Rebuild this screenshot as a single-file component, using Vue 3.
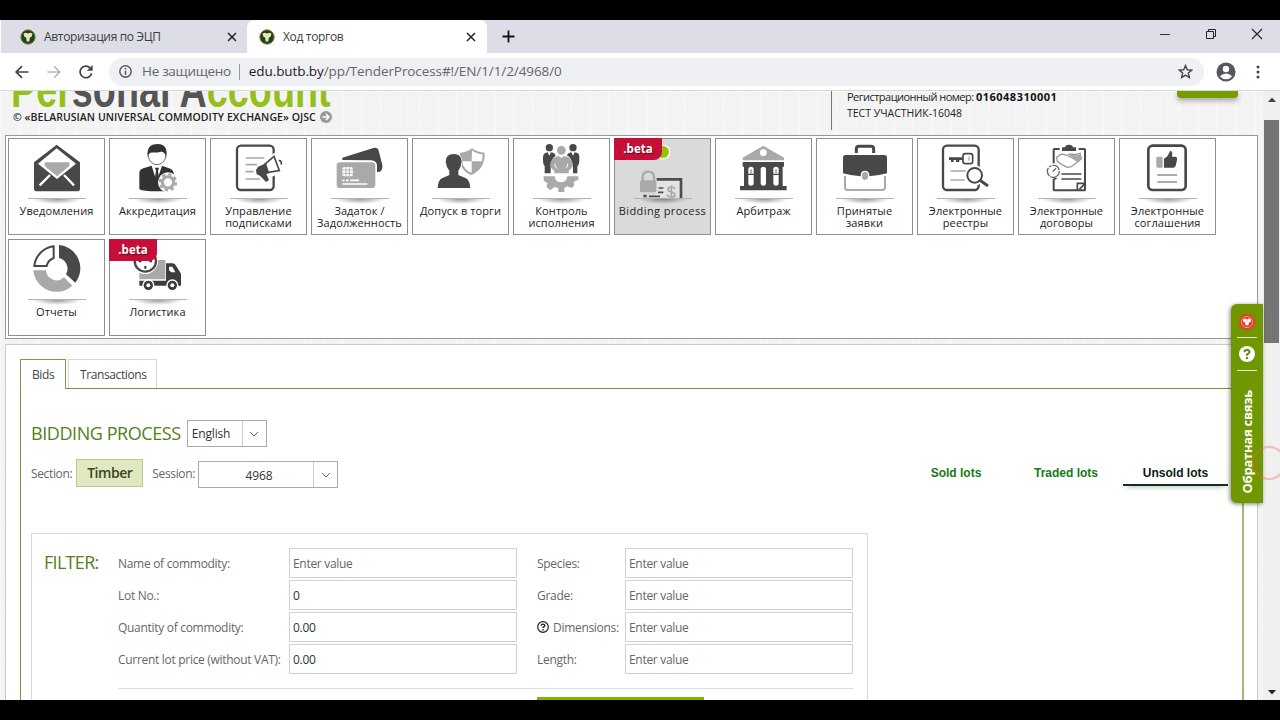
<template>
  <div class="screen">
    <!-- Tab strip -->
    <div class="tab-strip">
      <div v-for="tab in browserTabs" :key="tab.title" class="browser-tab" :class="{ current: tab.current }">
        <svg class="favicon" width="16" height="16" viewBox="0 0 16 16">
          <circle cx="8" cy="8" r="7.2" fill="#0c4a25" stroke="#a8762c" stroke-width="1" />
          <path d="M3.5 4.6l2.2-.9L8 4.6l2.300-.9 2.200.9-.9 3.200-1.700.8-.6 3.900H6.700l-.6-3.900-1.700-.8z" fill="#f3e3b4" />
        </svg>
        <span class="tab-title">{{ tab.title }}</span>
        <svg width="10" height="10" viewBox="0 0 10 10"><path d="M1 1l8 8M9 1L1 9" stroke="#222" stroke-width="1.5" /></svg>
      </div>
      <svg class="new-tab" width="13" height="13" viewBox="0 0 13 13"><path d="M6.5 .5v12M.5 6.5h12" stroke="#111" stroke-width="1.8" /></svg>
      <div class="window-buttons">
        <svg width="12" height="12" viewBox="0 0 12 12"><path d="M1 6.5h10" stroke="#333" /></svg>
        <svg width="12" height="12" viewBox="0 0 12 12"><path d="M1.5 3.5h7v7h-7zM3.5 3.5v-2h7v7h-2" fill="none" stroke="#222" /></svg>
        <svg width="12" height="12" viewBox="0 0 12 12"><path d="M1 1l10 10M11 1L1 11" stroke="#222" stroke-width="1.1" /></svg>
      </div>
    </div>

    <!-- Toolbar -->
    <div class="toolbar">
      <svg class="nav" width="14" height="14" viewBox="0 0 14 14"><path d="M13.5 7H1.5M7 1.2L1.2 7 7 12.8" fill="none" stroke="#444" stroke-width="1.7" /></svg>
      <svg class="nav" width="14" height="14" viewBox="0 0 14 14"><path d="M.5 7h12M7 1.2L12.8 7 7 12.8" fill="none" stroke="#b4b4b6" stroke-width="1.5" /></svg>
      <svg class="nav" width="14" height="14" viewBox="0 0 14 14">
        <path d="M12.6 8.2A5.8 5.8 0 1 1 11.2 3" fill="none" stroke="#444" stroke-width="1.7" />
        <path d="M13.6 0v5.8H7.8z" fill="#444" />
      </svg>
      <div class="address">
        <svg width="13" height="13" viewBox="0 0 13 13">
          <circle cx="6.5" cy="6.5" r="5.7" fill="none" stroke="#555" stroke-width="1.4" />
          <path d="M6.5 5.7v4M6.5 3v1.5" stroke="#555" stroke-width="1.5" />
        </svg>
        <span class="insecure">Не защищено</span>
        <span class="divider"></span>
        <span class="url"><b>edu.butb.by</b>/pp/TenderProcess#!/EN/1/1/2/4968/0</span>
        <svg class="star" width="15" height="15" viewBox="0 0 24 24">
          <path d="M12 2.5l2.8 6.7 7.2.6-5.5 4.7 1.7 7.1-6.2-3.8-6.2 3.8 1.7-7.1L2 9.800l7.200-.6z" fill="none" stroke="#444" stroke-width="2.2" />
        </svg>
      </div>
      <svg class="avatar" width="20" height="20" viewBox="0 0 20 20">
        <circle cx="10" cy="10" r="9.5" fill="#55575c" />
        <circle cx="10" cy="7" r="3.2" fill="#fff" />
        <path d="M3.8 14.2Q10 8.6 16.2 14.2 13.8 17.2 10 17.2T3.8 14.2z" fill="#fff" />
      </svg>
      <svg width="4" height="14" viewBox="0 0 4 14"><g fill="#444"><circle cx="2" cy="2" r="1.5" /><circle cx="2" cy="7" r="1.5" /><circle cx="2" cy="12" r="1.5" /></g></svg>
    </div>

    <div class="viewport">
      <div class="page">
        <header class="site-header">
          <div class="brand">
            <div class="brand-title"><span>Per</span>sonal A<span>ccount</span></div>
            <div class="brand-owner">
              <span class="owner-text">© «BELARUSIAN UNIVERSAL COMMODITY EXCHANGE» OJSC</span>
              <svg width="12" height="12" viewBox="0 0 12 12">
                <circle cx="6" cy="6" r="6" fill="#999" />
                <path d="M2.5 6h6M6 3l3 3-3 3" fill="none" stroke="#fff" stroke-width="1.6" />
              </svg>
            </div>
          </div>
          <div class="member">
            <div class="reg">Регистрационный номер: <b>016048310001</b></div>
            <div class="member-name">ТЕСТ УЧАСТНИК-16048</div>
          </div>
          <div class="exit-btn"></div>
        </header>

        <!-- Main menu -->
        <nav class="menu">
          <a v-for="item in menu" :key="item.label" class="tile" :class="{ active: item.active }">
            <svg class="tile-icon" width="97" height="60" :viewBox="item.box" v-html="item.icon"></svg>
            <span class="tile-line"></span>
            <span class="tile-label">{{ item.label }}</span>
            <span v-if="item.beta" class="beta">.beta</span>
          </a>
        </nav>

        <main class="content">
          <div class="tabs">
            <div class="tab selected">Bids</div>
            <div class="tab">Transactions</div>
          </div>
          <section class="tab-body">
            <div class="title-row">
              <h1>BIDDING PROCESS</h1>
              <div class="select language">
                <span class="value">English</span>
                <span class="arrow"><svg width="10" height="6" viewBox="0 0 10 6"><path d="M1 1l4 4 4-4" fill="none" stroke="#666" /></svg></span>
              </div>
            </div>
            <div class="session-row">
              <span class="caption">Section:</span>
              <button class="section-btn">Timber</button>
              <span class="caption">Session:</span>
              <div class="select number">
                <span class="value">4968</span>
                <span class="arrow"><svg width="10" height="6" viewBox="0 0 10 6"><path d="M1 1l4 4 4-4" fill="none" stroke="#666" /></svg></span>
              </div>
              <div class="lots">
                <a>Sold lots</a>
                <a>Traded lots</a>
                <a class="chosen">Unsold lots</a>
              </div>
            </div>

            <div class="filter">
              <h2>FILTER:</h2>
              <div class="filter-body">
                <div class="fields">
                  <template v-for="row in filterRows" :key="row.left">
                    <label>{{ row.left }}</label>
                    <div class="input" :class="{ filled: row.value }">{{ row.value || 'Enter value' }}</div>
                    <label class="right">
                      <svg v-if="row.help" width="12" height="12" viewBox="0 0 12 12">
                        <circle cx="6" cy="6" r="5.3" fill="none" stroke="#222" stroke-width="1.2" />
                        <path d="M4.2 4.7Q4.3 3.1 6 3.1T7.8 4.6Q7.7 5.5 6 6.3v.8M6 8v1.4" fill="none" stroke="#222" stroke-width="1.4" />
                      </svg>
                      {{ row.right }}
                    </label>
                    <div class="input">Enter value</div>
                  </template>
                </div>
                <div class="filter-end"><div class="search-btn"></div></div>
              </div>
            </div>
          </section>
        </main>
      </div>

      <div class="scrollbar">
        <svg width="8" height="5" viewBox="0 0 8 5"><path d="M0 5l4-4.5L8 5z" fill="#444" /></svg>
        <div class="thumb"></div>
        <svg width="8" height="5" viewBox="0 0 8 5"><path d="M0 0l4 4.5L8 0z" fill="#222" /></svg>
      </div>
    </div>

    <!-- Feedback panel -->
    <aside class="feedback">
      <svg width="20" height="20" viewBox="0 0 20 20">
        <circle cx="10" cy="10" r="8.5" fill="none" stroke="#e8452c" stroke-width="1.5" stroke-dasharray="1.3 1" />
        <circle cx="10" cy="10" r="7.3" fill="#dd3c22" />
        <circle cx="10" cy="10" r="5.6" fill="none" stroke="#f7c4b8" stroke-width=".7" />
        <g fill="#fff"><circle cx="8" cy="8.5" r="2" /><circle cx="12" cy="8.5" r="2" /><circle cx="10" cy="11.5" r="2" /></g>
      </svg>
      <span class="rule"></span>
      <svg width="16" height="16" viewBox="0 0 16 16">
        <circle cx="8" cy="8" r="8" fill="#fff" />
        <path d="M5.4 6.2Q5.5 4 8 4t2.6 2Q10.5 7.3 8 8.5v1.3M8 10.9v2" fill="none" stroke="#638b00" stroke-width="2" />
      </svg>
      <span class="rule second"></span>
      <span class="feedback-text">Обратная связь</span>
    </aside>
    <div class="click-ring"></div>
  </div>
</template>

<script setup>
const browserTabs = [
  { title: 'Авторизация по ЭЦП' },
  { title: 'Ход торгов', current: true }
]

const dark = '#484848'
const gray = '#a9a9a9'

// Every icon is drawn on a 291x180 area, shown at a third of that size
const menu = [
  {
    label: 'Уведомления',
    box: '24 24 291 180',
    icon: `<path d="M102 97L170 44 240 97V177q0 7-7 7H109q-7 0-7-7z" fill="${dark}"/>
      <path d="M114 101L170 55 228 101 171 147z" fill="#fff"/>
      <path d="M134 97h74v11l-37 31-37-31z" fill="${gray}"/>
      <path d="M119 166l31-31M222 166l-30-31" stroke="#fff" stroke-width="7"/>`
  },
  {
    label: 'Аккредитация',
    box: '327 24 291 180',
    icon: `<path d="M445 76C445 94 460 104 471 104S497 94 497 76" fill="#fff" stroke="${dark}" stroke-width="2.5"/>
      <path d="M443 80C439 50 455 42 473 42 496 42 503 58 499 82 495 68 488 64 480 66 464 70 452 64 447 72z" fill="#333"/>
      <path d="M418 178V128Q419 118 430 115L455 107 470 155 486 107 511 116Q521 120 522 135V150L504 184H470Q430 184 418 178z" fill="#333"/>
      <path d="M465 113h12l-3 10 5 32-8 12-8-12 5-32z" fill="#333"/>
      <circle cx="504" cy="157" r="30" fill="#fff"/>
      <circle cx="504" cy="157" r="24" fill="none" stroke="${gray}" stroke-width="7" stroke-dasharray="10 8.85"/>
      <circle cx="504" cy="157" r="17" fill="none" stroke="${gray}" stroke-width="9"/>`
  },
  {
    label: 'Управление подписками',
    box: '630 24 291 180',
    icon: `<rect x="711" y="47" width="110" height="133" rx="12" fill="none" stroke="${dark}" stroke-width="7"/>
      <path d="M737 84h56M737 104h34M737 125h25M737 147h46" stroke="${gray}" stroke-width="5"/>
      <path d="M762 112L796 94 822 68 849 90 844 128 816 140 812 160 795 162 774 140 760 134z" fill="#fff"/>
      <path d="M794 103L822 79 838 122 800 128z" fill="#fff" stroke="${dark}" stroke-width="5"/>
      <path d="M768 120L774 110 798 100 808 129 799 132 807 150 798 156 780 137 770 133z" fill="${dark}"/>
      <path d="M836 92q9-2 8 12" fill="none" stroke="${dark}" stroke-width="5"/>`
  },
  {
    label: 'Задаток / Задолженность',
    box: '9 24 291 180',
    icon: `<path d="M103 90L103 83 196 54q13-3 16 8l11 42q2 14-7 21l-9 1V106Q205 92 190 91z" fill="${dark}"/>
      <rect x="82" y="93" width="124" height="84" rx="13" fill="#fff"/>
      <rect x="86" y="97" width="116" height="77" rx="10" fill="${gray}"/>
      <rect x="103" y="111" width="32" height="28" rx="7" fill="#fff"/>
      <path d="M103 120h11v-9M103 130h11v9M135 120h-11v-9M135 130h-11v9M114 120h10v10h-10z" fill="none" stroke="${gray}" stroke-width="2.5"/>
      <path d="M103 151h7M114 151h8M127 151h26M103 162h75" stroke="#fff" stroke-width="5"/>`
  },
  {
    label: 'Допуск в торги',
    box: '312 24 291 180',
    icon: `<path d="M456 68Q478 67 492 55 507 67 530 68 532 117 489 135 460 122 456 95z" fill="${gray}"/>
      <path d="M492 61Q506 72 524 73L522 94H491zM491 94V129Q464 118 463 94z" fill="#fff"/>
      <path d="M411 98q0-30 26-30t26 30q-2 16-9 26v10l22 10q12 8 13 35H384z" fill="#fff"/>
      <path d="M413 95q0-23 24-23t24 23q-2 17-10 27v13l23 10q11 6 13 29h-98q1-23 13-29l22-10V122q-9-10-11-27z" fill="${dark}"/>`
  },
  {
    label: 'Контроль исполнения',
    box: '615 24 291 180',
    icon: `<g fill="${dark}"><circle cx="724" cy="53" r="11"/><circle cx="795" cy="53" r="11"/>
      <path d="M705 80q2-12 14-13l5 10 5-10q14 1 14 14v49h-33V108q-6-4-5-28zM776 80q2-12 14-13l5 10 5-10q14 1 14 14 1 24-6 28v21h-32z"/></g>
      <path d="M747 58h26l2 18q22 8 20 52v6H728v-12q-2-38 18-46z" fill="#fff"/>
      <circle cx="760" cy="61" r="13" fill="${gray}"/>
      <path d="M727 102q4-22 25-24l8 6 8-6q21 2 26 24 2 10-12 20v8h-43v-8q-14-8-12-20z" fill="${gray}"/>
      <path d="M741 101q-2 8 6 14M779 101q2 8-6 14" fill="none" stroke="#fff" stroke-width="3"/>
      <path d="M707 139h33q2 18 19 18t19-18h33v10l-14 6 2 10-7 9-15-5-8 5v12h-18v-12l-12-3-12 10-12-11 4-10-12-8z" fill="${gray}"/>`
  },
  {
    label: 'Bidding process',
    box: '12 24 291 180',
    active: true,
    beta: true,
    icon: `<circle cx="159" cy="66" r="22" fill="#fff"/><circle cx="159" cy="66" r="18" fill="#94c100"/>
      <path d="M138 150h74v52h-74z" fill="#e4e4e4"/>
      <path d="M140 148H213V204M100 198h10" fill="none" stroke="#4d4d4d" stroke-width="8"/>
      <path d="M146 174h14M144 187h16M117 199h33" stroke="#4d4d4d" stroke-width="5"/>
      <rect x="87" y="150" width="55" height="41" rx="6" fill="#dadada"/>
      <path d="M98 154V142q0-17 17-17t17 17v12" fill="none" stroke="#aaa" stroke-width="7"/>
      <rect x="90" y="151" width="49" height="36" rx="5" fill="#aaa"/>
      <path d="M195 177q-3-6-11-6-10 0-10 7t10 8q11 2 11 9 0 6-11 6t-12-7M184 166v38" fill="none" stroke="#aaa" stroke-width="5"/>`
  },
  {
    label: 'Арбитраж',
    box: '315 24 291 180',
    icon: `<path d="M398 91V83L460 47 522 83v8z" fill="${gray}"/><circle cx="460" cy="68" r="10" fill="#fff"/>
      <path d="M398 96H522V110H518V168h12v13H390V168h12V110H398z" fill="${dark}"/>
      <g fill="#fff"><rect x="415" y="110" width="16" height="57" rx="8"/><rect x="452" y="110" width="16" height="57" rx="8"/><rect x="490" y="110" width="16" height="57" rx="8"/></g>
      <path d="M413 133h20M489 133h20" stroke="${dark}" stroke-width="4"/>
      <path d="M423 118v14M498 118v14" stroke="${gray}" stroke-width="5"/>`
  },
  {
    label: 'Принятые заявки',
    box: '618 24 291 180',
    icon: `<path d="M739 69V57q0-8 8-8h36q8 0 8 8v12" fill="none" stroke="${dark}" stroke-width="9"/>
      <path d="M705 138v34q0 8 8 8h104q8 0 8-8v-34" fill="none" stroke="${gray}" stroke-width="6"/>
      <path d="M699 83q0-8 8-8h116q8 0 8 8v47q-30 8-54 9H752q-24-1-53-9z" fill="${dark}"/>
      <path d="M754 144v-8q0-12 11-12t11 12v8q-2 8-11 8t-11-8z" fill="${gray}" stroke="#fff" stroke-width="4"/>`
  },
  {
    label: 'Электронные реестры',
    box: '17 24 291 180',
    icon: `<rect x="95" y="47" width="107" height="133" rx="12" fill="none" stroke="${dark}" stroke-width="7"/>
      <path d="M117 123h48M117 150h43" stroke="${gray}" stroke-width="5"/>
      <path d="M113 86h42M119 92h8M134 92h10" stroke="${dark}" stroke-width="8"/>
      <rect x="155" y="71" width="29" height="30" rx="7" fill="#fff" stroke="${dark}" stroke-width="5"/>
      <path d="M173 80v12" stroke="${gray}" stroke-width="4"/>
      <path d="M206 150l24 18" stroke="#fff" stroke-width="20"/>
      <circle cx="190" cy="136" r="30" fill="#fff"/>
      <circle cx="190" cy="136" r="22" fill="#fff" stroke="${dark}" stroke-width="6"/>
      <path d="M206 151l24 17" stroke="${dark}" stroke-width="9"/>`
  },
  {
    label: 'Электронные договоры',
    box: '320 24 291 180',
    icon: `<rect x="427" y="57" width="94" height="124" rx="2" fill="#fff" stroke="${dark}" stroke-width="6"/>
      <path d="M445 48h57v22h-57z" fill="#fff"/>
      <path d="M452 63V52h9q1-8 12-8t12 8h9v11z" fill="${dark}"/>
      <path d="M436 82l14-10 18 4 8-4 16 2 14-4 4 16-14 12-16 12-12 2-16-8-14-10z" fill="#fff" stroke="#999" stroke-width="4"/>
      <path d="M468 80l10-6 18 2 12-2 2 12-14 10-16-12z" fill="${gray}"/>
      <path d="M450 132h60M450 147h60" stroke="${dark}" stroke-width="4.5"/>
      <path d="M498 181V160h23M504 178l14-14" fill="none" stroke="${dark}" stroke-width="5"/>
      <circle cx="426" cy="124" r="24" fill="#fff"/>
      <circle cx="426" cy="124" r="18" fill="none" stroke="#666" stroke-width="4" stroke-dasharray="26 3 8 3"/>
      <path d="M434 115l-10 10M424 142l10 4-8 3" fill="none" stroke="${dark}" stroke-width="3.5"/>`
  },
  {
    label: 'Электронные соглашения',
    box: '623 24 291 180',
    icon: `<rect x="711" y="47" width="112" height="133" rx="13" fill="none" stroke="${dark}" stroke-width="8"/>
      <rect x="735" y="80" width="19" height="33" rx="4" fill="${gray}"/>
      <path d="M758 86l10-7 9-17q8 1 5 18h12q5 2 3 10l-4 17q-2 6-8 6h-27z" fill="${dark}"/>
      <path d="M738 135h59M738 156h59" stroke="${gray}" stroke-width="6"/>`
  },
  {
    label: 'Отчеты',
    box: '24 9 291 180',
    icon: `<path d="M177 27A70 70 0 0 1 226 140L198 115A33 33 0 0 0 177 66z" fill="${dark}"/>
      <path d="M100 103A70 70 0 0 0 217 149L192 124A32 32 0 0 1 138 103z" fill="${gray}"/>
      <path d="M103 90A66 66 0 0 1 161 31V66A34 34 0 0 0 140 90z" fill="#fff" stroke="${dark}" stroke-width="6"/>`
  },
  {
    label: 'Логистика',
    box: '327 9 291 180',
    beta: true,
    icon: `<path d="M418 110V130H496V72H466Q474 100 450 111 434 117 418 110z" fill="${gray}"/>
      <circle cx="436" cy="75" r="38" fill="#fff"/>
      <circle cx="436" cy="75" r="32" fill="#fff" stroke="${dark}" stroke-width="7"/>
      <path d="M416 76h8M448 76h8M436 90v8" stroke="#333" stroke-width="6"/>
      <path d="M418 134h80V82h20q7 0 11 9l14 22v36H418z" fill="#3c3c3c"/>
      <path d="M507 92h10l9 17h-12l-7-6z" fill="#fff"/>
      <g fill="#3c3c3c" stroke="#fff" stroke-width="4"><circle cx="445" cy="148" r="16"/><circle cx="517" cy="148" r="16"/></g>
      <g fill="#fff"><circle cx="445" cy="148" r="6"/><circle cx="517" cy="148" r="6"/></g>`
  }
]

const filterRows = [
  { left: 'Name of commodity:', right: 'Species:' },
  { left: 'Lot No.:', value: '0', right: 'Grade:' },
  { left: 'Quantity of commodity:', value: '0.00', right: 'Dimensions:', help: true },
  { left: 'Current lot price (without VAT):', value: '0.00', right: 'Length:' }
]
</script>

<style>
body {
  background: #000;
}
</style>

<style scoped>
.screen {
  position: relative;
  display: flex;
  flex-direction: column;
  box-sizing: border-box;
  width: 1280px;
  height: 720px;
  padding: 20px 0;
  overflow: hidden;
  background: #000;
  font-family: 'Open Sans', 'Noto Sans', sans-serif;
  color: #222;
}

.screen * {
  box-sizing: border-box;
}

svg {
  display: block;
  flex-shrink: 0;
}

/* Browser frame */
.tab-strip {
  display: flex;
  align-items: center;
  height: 33px;
  background: #dcdde6;
  border-left: 1px solid #fff;
}

.browser-tab {
  display: flex;
  align-items: center;
  width: 246px;
  height: 33px;
  padding: 0 10px 0 19px;
}

.browser-tab.current {
  width: 240px;
  padding: 0 11px 0 12px;
  background: #fff;
  border-radius: 7px 7px 0 0;
}

.tab-title {
  flex: 1;
  margin-left: 8px;
  font-size: 12px;
  letter-spacing: -0.33px;
  color: #3c3c3c;
  white-space: nowrap;
}

.new-tab {
  margin-left: 15px;
}

.window-buttons {
  display: flex;
  gap: 34px;
  margin: -5px 17px 0 auto;
}

.toolbar {
  display: flex;
  align-items: center;
  height: 37px;
  padding: 0 20px 0 15px;
  background: #fff;
}

.nav {
  margin-right: 18px;
}

.address {
  display: flex;
  align-items: center;
  width: 1095px;
  height: 28px;
  margin-left: -2px;
  padding: 0 11px 0 10px;
  border-radius: 14px;
  background: #eff0f4;
  font-size: 13.5px;
  line-height: 17px;
  color: #666;
  white-space: nowrap;
}

.insecure {
  margin-left: 10px;
  letter-spacing: -0.3px;
}

.divider {
  width: 1px;
  height: 16px;
  margin: 0 9px 0 8px;
  background: #999;
}

.url {
  letter-spacing: -0.09px;
}

.url b {
  font-weight: 400;
  color: #222;
}

.star {
  margin-left: auto;
}

.avatar {
  margin: 0 20px 0 auto;
}

.viewport {
  display: flex;
  height: 610px;
  border-top: 1px solid #d8d8da;
}

.page {
  width: 1263px;
  overflow: hidden;
  background:
    repeating-linear-gradient(90deg, rgba(255, 255, 255, 0.25) 0 2px, transparent 2px 7px, rgba(255, 255, 255, 0.15) 7px 8px, transparent 8px 19px),
    repeating-linear-gradient(rgba(255, 255, 255, 0.25) 0 1px, transparent 1px 6px, rgba(255, 255, 255, 0.15) 6px 8px, transparent 8px 17px),
    #f3f3f3;
}

/* Site header */
.site-header {
  display: flex;
  height: 44px;
  padding-left: 13px;
}

.brand {
  display: flex;
  flex-direction: column;
  justify-content: flex-end;
  width: 819px;
  height: 39px;
  padding-bottom: 6px;
  border-right: 1px solid #777;
}

.brand-title {
  width: 430px;
  margin: 0 0 2px -2px;
  font-family: 'Liberation Sans', sans-serif;
  font-size: 50px;
  font-weight: 700;
  line-height: 36px;
  color: #555;
  white-space: nowrap;
  transform: scaleX(0.755);
  transform-origin: left;
}

.brand-title span {
  color: #93c01a;
}

.brand-owner {
  display: flex;
  align-items: center;
  gap: 4px;
  height: 14px;
  font-size: 10.5px;
  font-weight: 600;
  line-height: 14px;
  letter-spacing: 0.06px;
  white-space: nowrap;
}

.member {
  width: 330px;
  margin: -2px 0 0 15px;
  font-size: 11px;
  line-height: 16px;
  white-space: nowrap;
}

.reg {
  letter-spacing: -0.52px;
}

.member b {
  letter-spacing: 0.5px;
  color: #111;
}

.member-name {
  font-size: 10.5px;
}

.exit-btn {
  width: 61px;
  height: 7px;
  background: #759c00;
  border-radius: 0 0 4px 4px;
  box-shadow: 0 3px 5px rgba(0, 0, 0, 0.3);
}

/* Menu tiles */
.menu {
  display: grid;
  grid-template-columns: repeat(12, 97px);
  grid-auto-rows: 97px;
  gap: 4px;
  width: 1253px;
  height: 204px;
  margin-left: 5px;
  padding: 2px;
  background: #fff;
  border: 1px solid #999;
}

.tile {
  position: relative;
  display: flex;
  flex-direction: column;
  align-items: center;
  border: 1px solid #8e8e8e;
  background: #fff;
}

.tile.active {
  background: #dadada;
}

.tile-icon {
  margin: -1px;
}

.tile-line {
  width: 58px;
  height: 7px;
  margin-top: 1px;
  border-top: 1px solid #b4b4b4;
  background: radial-gradient(ellipse 25px 5px at 50% 0, rgba(0, 0, 0, 0.4), transparent);
}

.tile-label {
  width: 90px;
  font-size: 11px;
  line-height: 12px;
  letter-spacing: 0.1px;
  text-align: center;
  color: #222;
}

.active .tile-label {
  letter-spacing: 0.4px;
}

.beta {
  position: absolute;
  top: -1px;
  left: -1px;
  width: 48px;
  height: 22px;
  border-radius: 0 0 8px 0;
  background: #c60f38;
  font-size: 11.5px;
  font-weight: 700;
  line-height: 21px;
  text-align: center;
  color: #fff;
  text-shadow: 1px 1px 1px rgba(0, 0, 0, 0.5);
}

/* Content */
.content {
  width: 1253px;
  height: 400px;
  margin: 5px 0 0 5px;
  padding: 14px;
  background: #fff;
  border: 1px solid #ccc;
}

.tabs {
  display: flex;
  gap: 3px;
  height: 29px;
}

.tab {
  width: 89px;
  height: 29px;
  padding-left: 11px;
  border: 1px solid #d6d6d6;
  border-bottom: 0;
  font-size: 12px;
  line-height: 30px;
  letter-spacing: -0.4px;
  color: #444;
}

.tab.selected {
  position: relative;
  z-index: 1;
  width: 46px;
  height: 30px;
  margin-right: -1px;
  background: #fff;
  border-color: #7d9a48;
}

.tab-body {
  width: 1224px;
  height: 360px;
  padding: 31px 10px 0;
  border: 1px solid #789438;
  border-right: 2px solid #9dbb72;
  border-bottom: 0;
}

.title-row {
  display: flex;
  align-items: center;
  gap: 6px;
  height: 27px;
}

h1,
h2 {
  margin: 0;
  font-size: 18px;
  font-weight: 400;
  letter-spacing: -0.43px;
  color: #55801c;
  white-space: nowrap;
}

h1 {
  padding-bottom: 2px;
}

.select {
  display: flex;
  height: 27px;
  border: 1px solid #aaa;
  font-size: 12px;
  letter-spacing: -0.15px;
  color: #333;
}

.select .value {
  flex: 1;
  padding-left: 4px;
  line-height: 26px;
}

.arrow {
  display: flex;
  align-items: center;
  justify-content: center;
  width: 24px;
  border-left: 1px solid #ccc;
}

.language {
  width: 80px;
}

.session-row {
  display: flex;
  align-items: center;
  height: 28px;
  margin-top: 12px;
}

.caption {
  font-size: 12px;
  letter-spacing: -0.35px;
  color: #666;
}

.section-btn {
  width: 67px;
  height: 28px;
  margin: -1px 9px 0 4px;
  padding: 0;
  border: 1px solid #b9c894;
  background: #dfe8bf;
  font-family: inherit;
  font-size: 14px;
  font-weight: 600;
  letter-spacing: -0.45px;
  color: #3c4428;
}

.select.number {
  width: 140px;
  margin: 3px 0 0 3px;
}

.number .value {
  padding-left: 6px;
  line-height: 27px;
  text-align: center;
}

.lots {
  display: flex;
  margin: -1px 4px 0 auto;
  font-family: 'Liberation Sans', sans-serif;
  font-size: 12px;
  font-weight: 700;
  line-height: 26px;
  color: #167a16;
  text-align: center;
}

.lots a {
  width: 110px;
  height: 26px;
}

.lots .chosen {
  width: 105px;
  margin-left: 2px;
  color: #0c1c10;
  border-bottom: 2px solid #123020;
  box-shadow: 0 5px 5px -4px rgba(0, 40, 0, 0.3);
}

/* Filter */
.filter {
  display: flex;
  width: 837px;
  height: 220px;
  margin-top: 46px;
  padding: 14px 13px 0 12px;
  border: 1px solid #d8d8d8;
}

h2 {
  width: 74px;
  line-height: 28px;
  letter-spacing: -0.7px;
}

.fields {
  display: grid;
  grid-template-columns: 171px 228px 20px 88px 228px;
  grid-auto-rows: 30px;
  row-gap: 2px;
  align-items: center;
  font-size: 12px;
  letter-spacing: -0.3px;
  color: #666;
}

.fields label {
  display: flex;
  align-items: center;
  gap: 4px;
  white-space: nowrap;
}

.fields .right {
  grid-column: 4;
}

.input {
  height: 30px;
  padding-left: 3px;
  border: 1px solid #d0d0d0;
  line-height: 30px;
}

.input.filled {
  color: #333;
}

.filter-end {
  margin-top: 14px;
  padding: 8px 0 0 419px;
  border-top: 1px solid #ddd;
}

.search-btn {
  width: 167px;
  height: 28px;
  background: #86b200;
}

/* Scrollbar */
.scrollbar {
  display: flex;
  flex-direction: column;
  align-items: center;
  width: 17px;
  padding: 6px 0 5px;
  background: #f0f0f0;
}

.thumb {
  width: 15px;
  height: 223px;
  margin: 18px 0 auto;
  background: #757575;
}

/* Feedback */
.feedback {
  position: absolute;
  top: 304px;
  left: 1231px;
  display: flex;
  flex-direction: column;
  align-items: center;
  width: 32px;
  height: 199px;
  padding-top: 8px;
  border-radius: 6px 0 0 6px;
  background: #6f9800;
  box-shadow: -1px 1px 4px rgba(0, 0, 0, 0.5);
}

.rule {
  width: 20px;
  height: 1px;
  margin: 5px 0 8px;
  background: #e3eccd;
}

.rule.second {
  margin-top: 8px;
}

.feedback-text {
  margin-top: 11px;
  writing-mode: vertical-rl;
  transform: rotate(180deg);
  font-size: 13px;
  font-weight: 700;
  line-height: 18px;
  letter-spacing: -0.25px;
  color: #fff;
  white-space: nowrap;
}

.click-ring {
  position: absolute;
  top: 446px;
  left: 1252px;
  width: 34px;
  height: 34px;
  border: 2px solid rgba(255, 90, 90, 0.35);
  border-radius: 50%;
}
</style>
